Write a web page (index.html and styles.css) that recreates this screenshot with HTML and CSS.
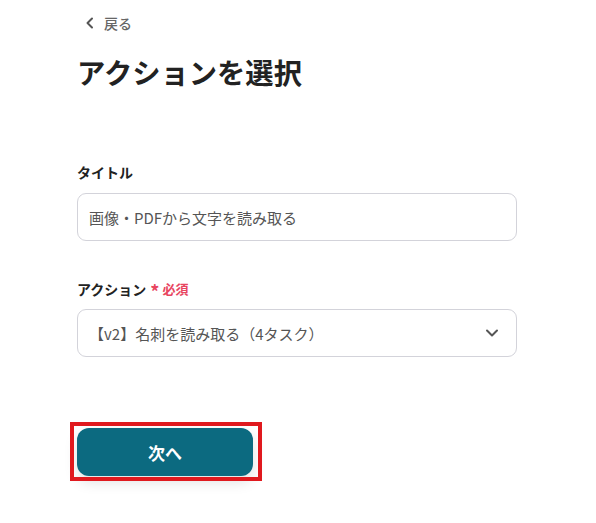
FILE: index.html
```html
<!DOCTYPE html>
<html lang="ja">
<head>
<meta charset="utf-8">
<link rel="stylesheet" href="styles.css">
</head>
<body>
<div class="page">
  <a class="back" href="#">
    <svg class="back-icon" width="10" height="12" viewBox="0 0 10 12"><path d="M7 1.5 L2.5 6 L7 10.5" fill="none" stroke="#555" stroke-width="2" stroke-linecap="round" stroke-linejoin="round"/></svg>
    <span>戻る</span>
  </a>
  <h1 class="title">アクションを選択</h1>

  <div class="field field-first">
    <div class="label">タイトル</div>
    <div class="input">画像・PDFから文字を読み取る</div>
  </div>

  <div class="field field-second">
    <div class="label">アクション<span class="req"><span class="star">*</span>必須</span></div>
    <div class="input select">
      <span>【v2】名刺を読み取る（4タスク）</span>
      <svg class="chev" width="14" height="10" viewBox="0 0 14 10"><path d="M2 2.5 L7 7.5 L12 2.5" fill="none" stroke="#555" stroke-width="2" stroke-linecap="round" stroke-linejoin="round"/></svg>
    </div>
  </div>

  <div class="actions">
    <button class="next">次へ</button>
    <div class="highlight"></div>
  </div>
</div>
</body>
</html>
```
FILE: styles.css
```css
html, body {
  margin: 0;
  padding: 0;
  background: #ffffff;
  font-family: "Noto Sans CJK JP", "Noto Sans", sans-serif;
  color: #222222;
}
.page {
  padding: 8px 0 40px 77px;
  width: 440px;
}
.back {
  display: flex;
  align-items: center;
  height: 30px;
  gap: 9px;
  padding-left: 8px;
  color: #666666;
  text-decoration: none;
  font-size: 14px;
  font-weight: 500;
}
.back-icon {
  display: block;
}
.title {
  margin: 13px 0 0 0;
  font-size: 28.3px;
  line-height: 42px;
  font-weight: 700;
  color: #222222;
}
.field-first {
  margin-top: 69px;
}
.field-second {
  margin-top: 38px;
}
.label {
  font-size: 14px;
  line-height: 20px;
  font-weight: 700;
  color: #222222;
  display: flex;
  align-items: center;
}
.req {
  color: #e8455f;
  font-size: 13px;
  font-weight: 700;
  margin-left: 4px;
  display: flex;
  align-items: center;
}
.star {
  font-size: 18px;
  line-height: 20px;
  margin-right: 3px;
  position: relative;
  top: 2px;
}
.input {
  margin-top: 11px;
  box-sizing: border-box;
  height: 48px;
  border: 1px solid #d3d3da;
  border-radius: 9px;
  padding: 0 11px;
  display: flex;
  align-items: center;
  font-size: 15px;
  color: #555555;
}
.select {
  margin-top: 10px;
  justify-content: space-between;
  padding-right: 17px;
}
.chev {
  display: block;
}
.actions {
  position: relative;
  margin-top: 71px;
}
.next {
  display: block;
  width: 176px;
  height: 48px;
  border: none;
  border-radius: 12px;
  background: #0c6a80;
  color: #ffffff;
  font-family: "Noto Sans CJK JP", "Noto Sans", sans-serif;
  font-size: 17px;
  font-weight: 700;
  box-shadow: 0 6px 14px rgba(0, 0, 0, 0.12);
}
.highlight {
  position: absolute;
  left: -7px;
  top: -6px;
  width: 184px;
  height: 51px;
  border: 4px solid #e0191e;
}
```
